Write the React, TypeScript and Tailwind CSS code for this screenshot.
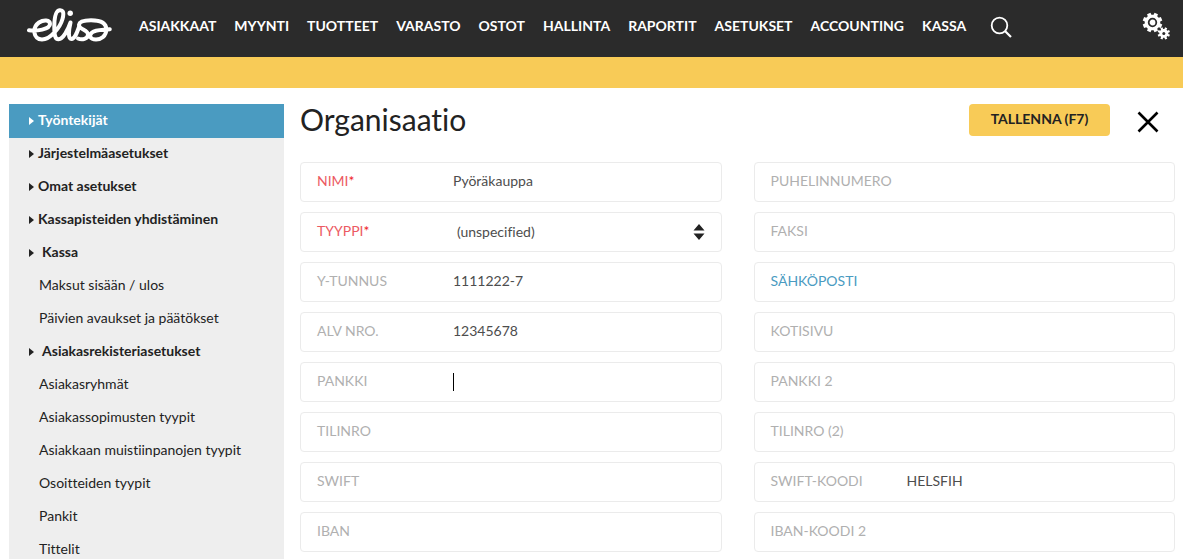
import React from "react";

const navItems = [
  "ASIAKKAAT",
  "MYYNTI",
  "TUOTTEET",
  "VARASTO",
  "OSTOT",
  "HALLINTA",
  "RAPORTIT",
  "ASETUKSET",
  "ACCOUNTING",
  "KASSA",
];

type SideItem = { label: string; kind: "link" | "group" | "sub"; active?: boolean };

const sideItems: SideItem[] = [
  { label: "Työntekijät", kind: "link", active: true },
  { label: "Järjestelmäasetukset", kind: "link" },
  { label: "Omat asetukset", kind: "link" },
  { label: "Kassapisteiden yhdistäminen", kind: "link" },
  { label: "Kassa", kind: "group" },
  { label: "Maksut sisään / ulos", kind: "sub" },
  { label: "Päivien avaukset ja päätökset", kind: "sub" },
  { label: "Asiakasrekisteriasetukset", kind: "group" },
  { label: "Asiakasryhmät", kind: "sub" },
  { label: "Asiakassopimusten tyypit", kind: "sub" },
  { label: "Asiakkaan muistiinpanojen tyypit", kind: "sub" },
  { label: "Osoitteiden tyypit", kind: "sub" },
  { label: "Pankit", kind: "sub" },
  { label: "Tittelit", kind: "sub" },
];

type FieldData = {
  id: string;
  label: string;
  value?: string;
  required?: boolean;
  link?: boolean;
  select?: boolean;
  caret?: boolean;
};

const leftFields: FieldData[] = [
  { id: "nimi", label: "NIMI", value: "Pyöräkauppa", required: true },
  { id: "tyyppi", label: "TYYPPI", value: "(unspecified)", required: true, select: true },
  { id: "ytunnus", label: "Y-TUNNUS", value: "1111222-7" },
  { id: "alv", label: "ALV NRO.", value: "12345678" },
  { id: "pankki", label: "PANKKI", caret: true },
  { id: "tilinro", label: "TILINRO" },
  { id: "swift", label: "SWIFT" },
  { id: "iban", label: "IBAN" },
];

const rightFields: FieldData[] = [
  { id: "puhelin", label: "PUHELINNUMERO" },
  { id: "faksi", label: "FAKSI" },
  { id: "email", label: "SÄHKÖPOSTI", link: true },
  { id: "kotisivu", label: "KOTISIVU" },
  { id: "pankki2", label: "PANKKI 2" },
  { id: "tilinro2", label: "TILINRO (2)" },
  { id: "swift2", label: "SWIFT-KOODI", value: "HELSFIH" },
  { id: "iban2", label: "IBAN-KOODI 2" },
];

const Logo = () => (
  <svg viewBox="0 0 86 36" className="h-9 w-[86px] shrink-0" fill="none" stroke="white" strokeWidth="4" strokeLinecap="round" strokeLinejoin="round" role="img" aria-label="elisa">
    <path d="M2 23.300C9 24.300 23 22.500 23 17C23 12.500 16.500 12.500 12 15.500C5 20.500 6 32.500 15 32.500C23 32.500 33 21 35.500 12C37.500 4.500 35.500 2.800 32.500 3.200C28.500 3.800 27.300 12 27.300 20C27.300 28 28 32.300 31.500 32.300C36 32 41 23 43.500 15.500C41.500 24 41 32 44.500 32C47.500 32 49.500 27 52 20" />
    <path d="M51 31.500C55 33.300 61 32 61 27.500C61 22.500 51.500 22.500 52 17.800C52.500 14 58 13.300 64 13.300C73 13.300 79.300 16 79.300 22.500C79.300 29 74 32.500 69 32.500C63 32.500 61.500 28.500 65 25.500C69 22.300 76 23.200 82.800 22.300" />
    <circle cx="43.200" cy="6.300" r="2.700" fill="white" stroke="none" />
  </svg>
);

// outline of a cog with square teeth
const gearPath = (cx: number, cy: number, outer: number, inner: number, teeth: number) => {
  const step = (Math.PI * 2) / teeth;
  const points: string[] = [];
  for (let i = 0; i < teeth; i++) {
    const a = i * step - Math.PI / 2 + step / 2;
    [[-0.32, inner], [-0.24, outer], [0.24, outer], [0.32, inner]].forEach(([k, r]) => {
      points.push(`${(cx + r * Math.cos(a + k * step)).toFixed(2)} ${(cy + r * Math.sin(a + k * step)).toFixed(2)}`);
    });
  }
  return `M${points.join("L")}Z`;
};

const Gears = () => (
  <svg viewBox="0 0 28 28" className="size-7">
    <path d={gearPath(10.5, 10.5, 10, 7.8, 8)} fill="white" />
    <circle cx="10.500" cy="10.500" r="3.800" fill="white" stroke="#2b2b2b" strokeWidth="1.800" />
    <path d={gearPath(21.8, 21.4, 6.3, 4.5, 8)} fill="white" />
    <circle cx="21.800" cy="21.400" r="1.500" fill="#2b2b2b" />
  </svg>
);

const Field = ({ field }: { field: FieldData }) => {
  const color = field.required ? "text-[#ec5a63]" : field.link ? "text-[#4a9bc1]" : "text-[#b0b0b0]";
  return (
    <div className="relative flex h-10 items-center rounded border border-[#ebebeb] px-4">
      <label htmlFor={field.id} className={`w-[136px] shrink-0 pb-0.5 whitespace-nowrap ${color}`}>
        {field.label}
        {field.required && <span className="text-[#f01e1e]">*</span>}
      </label>
      {field.caret && <span className="h-[18px] w-px bg-black" />}
      {field.select ? (
        <>
          <select id={field.id} className="min-w-0 flex-1 appearance-none bg-transparent px-1 text-[#4d4d4d] outline-none">
            <option>{field.value}</option>
          </select>
          <svg viewBox="0 0 12 16" className="pointer-events-none absolute right-4 h-4 w-3" fill="#222">
            <path d="M6 0L11.500 6.500H0.500ZM6 16L11.500 9.500H0.500Z" />
          </svg>
        </>
      ) : (
        <input id={field.id} type="text" defaultValue={field.value} className="min-w-0 flex-1 bg-transparent pb-0.5 text-[#4d4d4d] outline-none" />
      )}
    </div>
  );
};

export default function App(): React.JSX.Element {
  return (
    <div className="flex h-screen flex-col overflow-hidden bg-white font-['Lato',sans-serif] text-sm text-[#222] [font-variant-ligatures:none]">
      <header className="flex h-[57px] shrink-0 items-center bg-[#2b2b2b] pr-[13px] pl-[27px]">
        <a href="#" className="mb-2">
          <Logo />
        </a>
        <nav className="ml-[26px] flex items-center gap-[18px] pb-1 font-bold text-white">
          {navItems.map((item) => (
            <a key={item} href="#" className="pb-0.5">
              {item}
            </a>
          ))}
          <button type="button" aria-label="Haku" className="ml-1.5">
            <svg viewBox="0 0 22 22" className="size-[22px]" fill="none" stroke="white" strokeWidth="1.800">
              <circle cx="9.500" cy="9.500" r="7.800" />
              <path d="M15 15L21 21" strokeWidth="2.200" />
            </svg>
          </button>
        </nav>
        <button type="button" aria-label="Asetukset" className="mb-1.5 ml-auto">
          <Gears />
        </button>
      </header>
      <div className="h-[31px] shrink-0 bg-[#f8cb57]" />

      <div className="flex min-h-0 flex-1 gap-4 pt-4 pr-2 pl-[9px]">
        <aside className="w-[275px] shrink-0 overflow-hidden bg-[#eee]">
          <ul>
            {sideItems.map((item) => (
              <li key={item.label} className="h-[33px]">
                <a
                  href="#"
                  className={`flex items-center pb-0.5 ${item.kind === "sub" ? "pl-[30px]" : "pl-5 font-bold"} ${item.active ? "h-[34px] bg-[#4a9bc1] text-white" : "h-[33px]"}`}
                >
                  {item.kind !== "sub" && (
                    <svg viewBox="0 0 5 8" className={`mt-0.5 h-2 w-[5px] ${item.kind === "group" ? "mr-2" : "mr-1"}`} fill="currentColor">
                      <path d="M0 0L5 4L0 8Z" />
                    </svg>
                  )}
                  {item.label}
                </a>
              </li>
            ))}
          </ul>
        </aside>

        <main className="min-w-0 flex-1">
          <div className="mb-[26px] flex h-8 items-center">
            <h1 className="pb-0.5 text-3xl">Organisaatio</h1>
            <button type="button" className="ml-auto h-8 w-[141px] rounded bg-[#f8cb57] pb-0.5 font-bold">
              TALLENNA (F7)
            </button>
            <button type="button" aria-label="Sulje" className="mt-1 mr-4 ml-[27px]">
              <svg viewBox="0 0 22 22" className="size-[22px]" stroke="black" strokeWidth="2.600">
                <path d="M1.500 1.500L20.500 20.500M20.500 1.500L1.500 20.500" />
              </svg>
            </button>
          </div>
          <form className="grid grid-cols-2 gap-x-8">
            {[leftFields, rightFields].map((fields, i) => (
              <div key={i} className="flex flex-col gap-2.5">
                {fields.map((field) => (
                  <Field key={field.id} field={field} />
                ))}
              </div>
            ))}
          </form>
        </main>
      </div>
    </div>
  );
}
